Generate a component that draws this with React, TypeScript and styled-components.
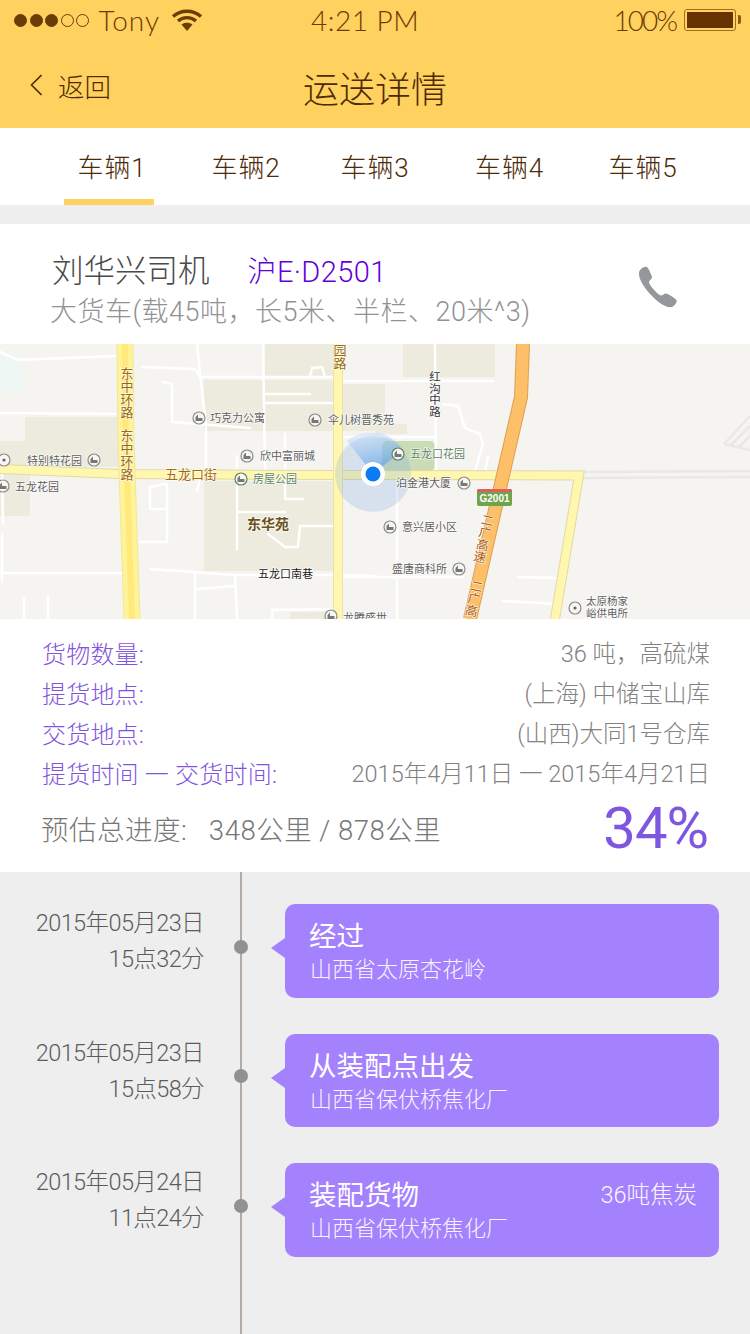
import React from "react";
import styled, { createGlobalStyle } from "styled-components";

const Global = createGlobalStyle`
  html, body { margin: 0; padding: 0; background: #eeeeee; }
  * { box-sizing: border-box; }
  body { font-family: Roboto, "Noto Sans CJK SC", sans-serif; font-weight: 300; }
`;

const Page = styled.div`
  width: 750px;
  height: 1334px;
  overflow: hidden;
  background: #eeeeee;
  display: flex;
  flex-direction: column;
`;

const Header = styled.header`
  height: 128px;
  background: #ffd25f;
  color: #5a3206;
  flex: none;
`;

const StatusBar = styled.div`
  height: 40px;
  padding: 0 10px 0 14px;
  display: grid;
  grid-template-columns: 297px 1fr auto;
  align-items: center;
  font-family: Lato, "Noto Sans", sans-serif;
  font-weight: 300;
  font-size: 28px;
  color: #6b3c06;
`;

const StatusLeft = styled.div`
  display: flex;
  align-items: center;
`;

const Dot = styled.span<{ $on: boolean }>`
  width: 13px;
  height: 13px;
  margin-right: 2.5px;
  border-radius: 50%;
  border: 1.5px solid #6b3c06;
  background: ${(p) => (p.$on ? "#6b3c06" : "transparent")};
`;

const Carrier = styled.span`
  margin: 0 11px 0 7px;
  letter-spacing: 1px;
`;

const Clock = styled.span`
  letter-spacing: 0.5px;
`;

const StatusRight = styled.div`
  display: flex;
  align-items: center;
  gap: 8px;
`;

const BatteryLevel = styled.span`
  letter-spacing: -2px;
`;

const Battery = styled.div`
  position: relative;
  width: 52px;
  height: 22px;
  border: 1.5px solid #a06f25;
  border-radius: 3px;
  padding: 2px;
  margin-right: 4px;
  &::after {
    content: "";
    position: absolute;
    right: -6px;
    top: 5px;
    width: 3px;
    height: 9px;
    border-radius: 0 2px 2px 0;
    background: #8a5a18;
  }
`;

const BatteryFill = styled.div`
  width: 100%;
  height: 100%;
  background: #653200;
`;

const NavBar = styled.div`
  height: 88px;
  display: grid;
  grid-template-columns: 1fr auto 1fr;
  align-items: center;
`;

const Back = styled.div`
  display: flex;
  align-items: center;
  gap: 16px;
  padding-left: 30px;
  font-size: 26.5px;
  margin-top: 2px;
  color: #4e2b05;
`;

const Title = styled.h1`
  margin: 6px 0 0;
  font-size: 36px;
  font-weight: 300;
  color: #4e2b05;
`;

const Tabs = styled.nav`
  height: 77px;
  flex: none;
  background: #fff;
  padding-left: 45px;
  display: grid;
  grid-template-columns: 134px 134px 124px 145px 122px;
`;

const Tab = styled.div<{ $active?: boolean }>`
  position: relative;
  display: flex;
  align-items: center;
  justify-content: center;
  padding-bottom: 3px;
  font-size: 26px;
  letter-spacing: 0.8px;
  color: #4e2a08;
  &::after {
    content: "";
    display: ${(p) => (p.$active ? "block" : "none")};
    position: absolute;
    left: 19px;
    bottom: 0;
    width: 90px;
    height: 6px;
    background: #ffd25f;
  }
`;

const Driver = styled.section`
  margin-top: 19px;
  height: 120px;
  flex: none;
  background: #fff;
  padding: 30px 72px 0 50px;
  display: flex;
  justify-content: space-between;
`;

const DriverText = styled.div`
  display: flex;
  flex-direction: column;
  gap: 4px;
`;

const DriverTop = styled.div`
  display: flex;
  align-items: baseline;
  gap: 38px;
  padding-left: 2px;
  height: 36px;
`;

const DriverName = styled.span`
  font-size: 31.5px;
  line-height: 36px;
  color: #4a4a4a;
`;

const Plate = styled.span`
  font-size: 29px;
  line-height: 36px;
  letter-spacing: 0.4px;
  color: #6200dc;
`;

const DriverSub = styled.div`
  font-size: 27px;
  line-height: 36px;
  letter-spacing: 0.5px;
  color: #929292;
`;

const PhoneIcon = styled.svg`
  width: 40px;
  height: 42px;
  margin-top: 12px;
`;

const MapArea = styled.div`
  height: 275px;
  flex: none;
  background: #f5f4f0;
`;

const MapSvg = styled.svg`
  display: block;
  width: 750px;
  height: 275px;
`;

const MapText = styled.text<{ $c?: string; $s?: number; $w?: number }>`
  font-family: "Noto Sans CJK SC", sans-serif;
  font-size: ${(p) => p.$s ?? 11}px;
  font-weight: ${(p) => p.$w ?? 400};
  fill: ${(p) => p.$c ?? "#5f5f5f"};
  paint-order: stroke;
  stroke: rgba(255, 255, 255, 0.75);
  stroke-width: 1.5px;
`;

const BadgeText = styled.text`
  font-family: "Liberation Sans", sans-serif;
  font-size: 10px;
  font-weight: 700;
  fill: #fff;
`;

const Info = styled.section`
  height: 253px;
  flex: none;
  background: #fff;
  padding: 13px 40px 0 41px;
  display: flex;
  flex-direction: column;
`;

const InfoRow = styled.div`
  height: 40px;
  display: flex;
  justify-content: space-between;
  align-items: center;
  font-size: 23.5px;
`;

const Label = styled.span`
  color: #7f55e0;
  font-size: 24px;
  letter-spacing: 0.2px;
  padding-left: 1px;
`;

const Value = styled.span`
  color: #828282;
`;

const Progress = styled.div`
  margin-top: 4px;
  display: flex;
  justify-content: space-between;
  align-items: center;
  height: 64px;
  padding-right: 2px;
`;

const ProgressText = styled.span`
  font-size: 27.5px;
  letter-spacing: 0.5px;
  white-space: pre;
  color: #777;
`;

const Percent = styled.span`
  font-size: 58px;
  line-height: 64px;
  font-weight: 400;
  letter-spacing: -1px;
  color: #7e57e0;
`;

const Timeline = styled.section`
  position: relative;
  flex: 1;
  padding-top: 32px;
  display: flex;
  flex-direction: column;
  gap: 36px;
  &::before {
    content: "";
    position: absolute;
    left: 240px;
    top: 0;
    bottom: 0;
    width: 2px;
    background: #b2aaa3;
  }
`;

const Event = styled.div`
  position: relative;
  height: 93.5px;
  display: flex;
  align-items: center;
`;

const When = styled.div`
  width: 204px;
  text-align: right;
  font-size: 23.5px;
  letter-spacing: -0.6px;
  line-height: 36px;
  color: #5c5c5c;
  margin-top: -19px;
`;

const Node = styled.span`
  width: 14px;
  height: 14px;
  margin: -8px 0 0 30px;
  border-radius: 50%;
  background: #919191;
  position: relative;
  z-index: 1;
`;

const Card = styled.div`
  position: relative;
  width: 434px;
  height: 100%;
  margin-left: 37px;
  padding: 12px 22px 0 24px;
  border-radius: 10px;
  background: #a481fd;
  color: #fff;
  &::before {
    content: "";
    position: absolute;
    left: -14px;
    top: 34px;
    border-style: solid;
    border-width: 10px 14px 10px 0;
    border-color: transparent #a481fd transparent transparent;
  }
`;

const CardTop = styled.div`
  display: flex;
  justify-content: space-between;
  align-items: center;
  height: 36px;
`;

const CardTitle = styled.span`
  font-size: 27.5px;
  font-weight: 400;
`;

const CardNote = styled.span`
  font-size: 23.5px;
  color: #faf8ff;
`;

const CardSub = styled.div`
  font-size: 22px;
  line-height: 30px;
  margin-top: 3px;
  padding-left: 1px;
  color: #f8f5ff;
`;

const streets: string[] = [
  "0,8 18,16 115,12", "0,69 115,70", "142,23 195,25 201,34", "163,38 172,40 172,78 250,84",
  "197,0 200,30 206,80 206,125", "263,0 265,125", "200,33 333,33", "265,50 310,50", "265,59 333,59",
  "285,90 285,155 303,155", "237,112 237,205", "237,168 285,168", "200,135 197,147",
  "165,140 150,143 150,165 167,165", "167,140 167,198 140,198", "300,182 333,182", "300,182 298,203 285,203 268,190",
  "150,225 235,231 333,231", "343,231 375,232", "0,229 123,229", "195,230 195,275", "235,231 237,275", "197,245 235,242",
  "2,130 3,180", "2,190 2,238", "24,255 24,275", "48,252 48,275", "272,275 272,266 333,265", "310,33 312,24 322,23 325,33",
  "343,37 493,37", "343,93 435,93", "435,0 436,125", "443,60 458,62 465,84 480,90 483,100 475,127", "488,113 485,127",
  "397,136 397,275", "342,233 463,233", "518,233 560,234", "503,257 556,260",
];

type Lbl = { t: string; x: number; y: number; c?: string; s?: number; w?: number };

const labels: Lbl[] = [
  { t: "巧克力公寓", x: 210, y: 78 }, { t: "伞儿树晋秀苑", x: 328, y: 80 }, { t: "欣中富丽城", x: 260, y: 116 },
  { t: "特别特花园", x: 27, y: 121 }, { t: "五龙花园", x: 15, y: 147 },
  { t: "五龙口街", x: 165, y: 135, c: "#a2690f", s: 13 }, { t: "房屋公园", x: 253, y: 139, c: "#5c8464" },
  { t: "东华苑", x: 247, y: 185, c: "#6a5020", s: 14, w: 700 }, { t: "五龙口南巷", x: 258, y: 234, c: "#222" },
  { t: "龙腾盛世", x: 343, y: 278 }, { t: "五龙口花园", x: 410, y: 114, c: "#5c8464" }, { t: "泊金港大厦", x: 396, y: 143 },
  { t: "意兴居小区", x: 402, y: 187 }, { t: "盛唐商科所", x: 392, y: 229 },
  { t: "太原杨家", x: 586, y: 261, s: 10.5 }, { t: "峪供电所", x: 586, y: 273, s: 10.5 },
];

const vertical: Lbl[] = [
  { t: "东中环路", x: 127, y: 23, c: "#9a6a10", s: 13 }, { t: "东中环路", x: 127, y: 85, c: "#9a6a10", s: 13 },
  { t: "园路", x: 340, y: 0, c: "#9a6a10", s: 13 }, { t: "红沟中路", x: 435, y: 27, c: "#333", s: 11.5 },
];

const pois: [number, number, string, boolean][] = [
  [199, 74, "#8c8c8c", false], [315, 76, "#8c8c8c", false], [247, 112, "#8c8c8c", false], [94, 116, "#8c8c8c", false],
  [3, 142, "#8c8c8c", false], [4, 116, "#8c8c8c", true],
  [241, 135, "#5c8464", false], [398, 110, "#5c8464", false], [464, 139, "#8c8c8c", false], [390, 183, "#8c8c8c", false],
  [459, 225, "#8c8c8c", false], [575, 264, "#8c8c8c", true], [331, 272, "#8c8c8c", false],
];

const CityMap = () => (
  <MapArea>
    <MapSvg viewBox="0 0 750 275">
      <defs>
        <linearGradient id="fan" x1="0" y1="0" x2="0.3" y2="1">
          <stop offset="0" stopColor="#cfe2f8" stopOpacity="0.4" />
          <stop offset="1" stopColor="#4f9ce6" stopOpacity="0.7" />
        </linearGradient>
      </defs>
      <rect x="0" y="10" width="23" height="40" fill="#eef7f3" />
      <g fill="#ecebdd">
        <rect x="204" y="36" width="129" height="51" /><rect x="204" y="137" width="129" height="90" />
        <rect x="25" y="73" width="94" height="50" /><rect x="0" y="97" width="25" height="26" />
        <rect x="0" y="130" width="30" height="42" /><rect x="265" y="0" width="68" height="33" />
        <rect x="343" y="40" width="42" height="47" /><rect x="403" y="0" width="92" height="33" />
        <rect x="375" y="80" width="32" height="10" /><rect x="290" y="268" width="43" height="7" />
      </g>
      <rect x="382" y="97" width="53" height="30" rx="5" fill="#c9dcb6" />
      <g fill="none" stroke="#fff" strokeWidth="2.5" strokeLinejoin="round" strokeLinecap="round">
        {streets.map((p) => <polyline key={p} points={p} />)}
      </g>
      <g fill="none" stroke="#e9e8e4" strokeWidth="2.5">
        <line x1="580" y1="128" x2="750" y2="127" /><line x1="580" y1="134" x2="750" y2="133" />
        <path d="M724 100 L750 72 M730 102 L750 82 M738 104 L750 92 M724 100 L750 106" />
      </g>
      <g fill="none" strokeLinejoin="miter">
        <polyline points="0,125 120,130 333,131 579,131.5 555,275" stroke="#e2d9a4" strokeWidth="10" />
        <polyline points="0,125 120,130 333,131 579,131.5 555,275" stroke="#fff7ae" strokeWidth="8" />
        <polyline points="338,0 338,275" stroke="#ebe2a8" strokeWidth="10" />
        <polyline points="338,0 338,275" stroke="#fff7ae" strokeWidth="8" />
        <polyline points="125,0 126,100 132,275" stroke="#f3e795" strokeWidth="17" />
        <polyline points="125,0 126,100 132,275" stroke="#fff39a" strokeWidth="15" />
        <polyline points="125,0 126,100 132,275" stroke="#ffe97a" strokeWidth="6" />
        <polyline points="523,0 521,53 470,275" stroke="#dd9f52" strokeWidth="14" />
        <polyline points="523,0 521,53 470,275" stroke="#fdbf68" strokeWidth="12" />
      </g>
      <circle cx="373" cy="130" r="38" fill="#7aa9e4" fillOpacity="0.24" />
      <path d="M373 130 L347 97 A38 38 0 0 1 403 106 Z" fill="url(#fan)" />
      <circle cx="373" cy="130" r="12" fill="#fff" />
      <circle cx="373" cy="130" r="7.5" fill="#0a7bf5" />
      {pois.map(([x, y, c, dot]) => (
        <g key={`${x}-${y}`}>
          <circle cx={x} cy={y} r="6" fill="#f7f6f2" stroke={c} strokeWidth="1.2" />
          {dot ? (
            <circle cx={x} cy={y} r="1.6" fill="#666" />
          ) : (
            <path d={`M${x - 3.5} ${y + 3} V${y - 1} L${x - 1} ${y - 3.5} V${y} H${x + 3.5} V${y + 3} Z`} fill="#777" />
          )}
        </g>
      ))}
      {labels.map((l) => (
        <MapText key={l.t + l.x} x={l.x} y={l.y} $c={l.c} $s={l.s} $w={l.w}>{l.t}</MapText>
      ))}
      {vertical.map((l) => (
        <MapText key={l.t + l.y} x={l.x} y={l.y} $c={l.c} $s={l.s} style={{ writingMode: "vertical-rl" }}>{l.t}</MapText>
      ))}
      <MapText x={489} y={170} $c="#a85a10" $s={12.5} transform="rotate(12 489 170)" style={{ writingMode: "vertical-rl" }}>二广高速</MapText>
      <MapText x={478} y={236} $c="#a85a10" $s={12.5} transform="rotate(12 478 236)" style={{ writingMode: "vertical-rl" }}>二广高</MapText>
      <rect x="477" y="145" width="35" height="17" rx="2" fill="#6fa34c" />
      <path d="M477 148 v-1 a2 2 0 0 1 2 -2 h31 a2 2 0 0 1 2 2 v1 Z" fill="#d9605f" />
      <BadgeText x="494.5" y="158" textAnchor="middle">G2001</BadgeText>
    </MapSvg>
  </MapArea>
);

const events = [
  { date: "2015年05月23日", time: "15点32分", title: "经过", sub: "山西省太原杏花岭" },
  { date: "2015年05月23日", time: "15点58分", title: "从装配点出发", sub: "山西省保伏桥焦化厂" },
  { date: "2015年05月24日", time: "11点24分", title: "装配货物", sub: "山西省保伏桥焦化厂", note: "36吨焦炭" },
];

const rows: [string, string][] = [
  ["货物数量:", "36 吨，高硫煤"],
  ["提货地点:", "(上海) 中储宝山库"],
  ["交货地点:", "(山西)大同1号仓库"],
  ["提货时间 一 交货时间:", "2015年4月11日 一 2015年4月21日"],
];

export default function App() {
  return (
    <Page>
      <Global />
      <Header>
        <StatusBar>
          <StatusLeft>
            {[1, 1, 1, 0, 0].map((on, i) => <Dot key={i} $on={!!on} />)}
            <Carrier>Tony</Carrier>
            <svg width="32" height="22" viewBox="0 0 32 22" fill="none" stroke="#6b3c06" strokeWidth="3.4">
              <path d="M2 7.5 C10 0.5 22 0.5 30 7.5" />
              <path d="M7 12 C12 7.5 20 7.5 25 12" />
              <path d="M16 22 L10.5 15.5 C13.5 13 18.5 13 21.5 15.5 Z" fill="#6b3c06" stroke="none" />
            </svg>
          </StatusLeft>
          <Clock>4:21 PM</Clock>
          <StatusRight>
            <BatteryLevel>100%</BatteryLevel>
            <Battery><BatteryFill /></Battery>
          </StatusRight>
        </StatusBar>
        <NavBar>
          <Back>
            <svg width="12" height="22" viewBox="0 0 12 22" fill="none" stroke="#4e2b05" strokeWidth="1.6">
              <path d="M11.5 1 L1.5 11 L11.5 21" />
            </svg>
            <span>返回</span>
          </Back>
          <Title>运送详情</Title>
          <span />
        </NavBar>
      </Header>
      <Tabs>
        {[1, 2, 3, 4, 5].map((n) => <Tab key={n} $active={n === 1}>车辆{n}</Tab>)}
      </Tabs>
      <Driver>
        <DriverText>
          <DriverTop>
            <DriverName>刘华兴司机</DriverName>
            <Plate>沪E·D2501</Plate>
          </DriverTop>
          <DriverSub>大货车(载45吨，长5米、半栏、20米^3)</DriverSub>
        </DriverText>
        <PhoneIcon viewBox="0 0 40 42">
          <path d="M2 4 C4 1.5 7 0 9 1 C10.5 2 13.5 9 14 11 C14.3 13 11.5 14 11 16 C11 19 19 28 22.5 29.5 C24.5 30 26 27.5 28 27.5 C30.5 28 37 32 38.5 34 C39.5 36 36.5 40.5 33.5 41 C29 42 22 38 15 31 C7 23 1 14 1 8 C1 6.5 1 5.5 2 4 Z" fill="#94979c" />
        </PhoneIcon>
      </Driver>
      <CityMap />
      <Info>
        {rows.map(([l, v]) => (
          <InfoRow key={l}>
            <Label>{l}</Label>
            <Value>{v}</Value>
          </InfoRow>
        ))}
        <Progress>
          <ProgressText>{"预估总进度:   348公里 / 878公里"}</ProgressText>
          <Percent>34%</Percent>
        </Progress>
      </Info>
      <Timeline>
        {events.map((e) => (
          <Event key={e.time}>
            <When>{e.date}<br />{e.time}</When>
            <Node />
            <Card>
              <CardTop>
                <CardTitle>{e.title}</CardTitle>
                {e.note && <CardNote>{e.note}</CardNote>}
              </CardTop>
              <CardSub>{e.sub}</CardSub>
            </Card>
          </Event>
        ))}
      </Timeline>
    </Page>
  );
}
